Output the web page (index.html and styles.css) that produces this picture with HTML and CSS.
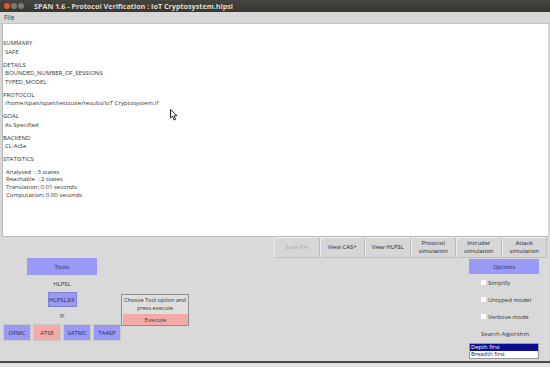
FILE: index.html
```html
<!DOCTYPE html>
<html>
    <head>
        <title>SPAN 1.6 - Protocol Verification</title>
        <meta name="viewport" content="width=device-width, initial-scale=1.0">
        <link rel="stylesheet" href="styles.css">
    </head>
    <body>
        <div class="window">
            <div class="titlebar">
                <span class="win-btn win-close"></span>
                <span class="win-btn"></span>
                <span class="win-btn"></span>
                <span class="title">SPAN 1.6 - Protocol Verification : IoT Cryptosystem.hlpsl</span>
            </div>
            <div class="menubar"><span class="menu-item">File</span></div>

            <div class="output">
                <div class="section">
                    <div class="head">SUMMARY</div>
                    <div class="line">SAFE</div>
                </div>
                <div class="section">
                    <div class="head">DETAILS</div>
                    <div class="line">BOUNDED_NUMBER_OF_SESSIONS</div>
                    <div class="line">TYPED_MODEL</div>
                </div>
                <div class="section">
                    <div class="head">PROTOCOL</div>
                    <div class="line">/home/span/span/testsuite/results/IoT Cryptosystem.if</div>
                </div>
                <div class="section">
                    <div class="head">GOAL</div>
                    <div class="line">As Specified</div>
                </div>
                <div class="section">
                    <div class="head">BACKEND</div>
                    <div class="line">CL-AtSe</div>
                </div>
                <div class="section">
                    <div class="head">STATISTICS</div>
                    <div class="stats">
                        <div class="line">Analysed &nbsp;: 3 states</div>
                        <div class="line">Reachable &nbsp;: 2 states</div>
                        <div class="line">Translation: 0.01 seconds</div>
                        <div class="line">Computation: 0.00 seconds</div>
                    </div>
                </div>
                <svg class="cursor" width="8" height="12" viewBox="0 0 8 12">
                    <path d="M0.5 0.5 L0.5 9 L2.6 7.2 L4.2 11 L5.6 10.4 L4.1 6.7 L7 6.7 Z" fill="#fff" stroke="#111" stroke-width="0.9"/>
                </svg>
            </div>

            <div class="panel">
                <div class="toolbar">
                    <button class="tb-btn disabled">Save file</button>
                    <button class="tb-btn">View CAS+</button>
                    <button class="tb-btn">View HLPSL</button>
                    <button class="tb-btn">Protocol<br>simulation</button>
                    <button class="tb-btn">Intruder<br>simulation</button>
                    <button class="tb-btn">Attack<br>simulation</button>
                </div>
                <div class="lower">
                    <div class="tools">
                        <div class="tree">
                            <div class="blue-btn tools-btn">Tools</div>
                            <div class="label label-hlpsl">HLPSL</div>
                            <div class="blue-btn hlpsl2if">HLPSL2IF</div>
                            <div class="label label-if">IF</div>
                            <div class="backends">
                                <div class="blue-btn backend">OFMC</div>
                                <div class="pink-btn backend">ATSE</div>
                                <div class="blue-btn backend">SATMC</div>
                                <div class="blue-btn backend">TA4SP</div>
                            </div>
                        </div>
                        <div class="exec-box">
                            <div class="exec-text">Choose Tool option and<br>press execute</div>
                            <div class="pink-btn exec-btn">Execute</div>
                        </div>
                    </div>
                    <div class="options">
                        <div class="blue-btn options-btn">Options</div>
                        <label class="opt"><span class="check"></span>Simplify</label>
                        <label class="opt"><span class="check"></span>Untyped model</label>
                        <label class="opt"><span class="check"></span>Verbose mode</label>
                        <div class="opt search">Search Algorithm</div>
                        <div class="algo-list">
                            <div class="algo selected">Depth first</div>
                            <div class="algo">Breadth first</div>
                        </div>
                    </div>
                </div>
            </div>
            <div class="bottom-edge"></div>
        </div>
    </body>
</html>
```
FILE: styles.css
```css
body {
    margin: 0;
    font-family: "Open Sans", "DejaVu Sans", sans-serif;
    background: #d8d8d8;
}
.window {
    width: 550px;
    height: 367px;
    display: flex;
    flex-direction: column;
    overflow: hidden;
}
.titlebar {
    height: 12px;
    flex-shrink: 0;
    background: linear-gradient(#45443f, #37362f);
    display: flex;
    align-items: center;
    padding-left: 4px;
    box-sizing: border-box;
}
.win-btn {
    width: 6px;
    height: 6px;
    border-radius: 50%;
    background: #7b7a74;
    margin-right: 1px;
}
.win-close {
    background: #e4572b;
}
.title {
    margin-left: 9px;
    color: #dfdbd2;
    font-size: 7.2px;
    font-weight: bold;
}
.menubar {
    height: 12px;
    flex-shrink: 0;
    background: #d7d7d5;
    border-bottom: 1px solid #c4c4c2;
    box-sizing: border-box;
    display: flex;
    align-items: center;
    padding-left: 4px;
}
.menu-item {
    font-size: 6.5px;
    color: #333;
}
.output {
    position: relative;
    flex: 1;
    background: #fff;
    margin: 0 2px 0 2px;
    border-left: 1px solid #b8b8b8;
    border-bottom: 1px solid #b8b8b8;
    padding: 15px 0 0 0;
    font-size: 6px;
    color: #333;
}
.section {
    margin-bottom: 4.5px;
}
.head, .line {
    line-height: 8.5px;
    white-space: nowrap;
}
.line {
    padding-left: 2px;
}
.stats {
    margin-top: 5px;
}
.stats .line {
    line-height: 7.8px;
    padding-left: 3px;
}
.cursor {
    position: absolute;
    left: 167px;
    top: 85px;
}
.panel {
    height: 124px;
    flex-shrink: 0;
    background: #d9d9d9;
    margin: 0 2px;
    display: flex;
    flex-direction: column;
}
.toolbar {
    display: flex;
    justify-content: flex-end;
    padding-right: 1px;
}
.tb-btn {
    width: 45.5px;
    height: 21px;
    padding: 0;
    margin: 0;
    background: #d6d6d6;
    border: 1px solid #bdbdbd;
    border-top-color: #ececec;
    border-left-color: #ececec;
    font-family: inherit;
    font-size: 6px;
    line-height: 7.5px;
    color: #262626;
}
.tb-btn.disabled {
    color: #a8a8a8;
}
.lower {
    flex: 1;
    display: flex;
    align-items: flex-start;
    justify-content: space-between;
}
.tools {
    display: flex;
    padding-left: 1px;
}
.tree {
    width: 118px;
    display: flex;
    flex-direction: column;
    align-items: center;
}
.blue-btn, .pink-btn {
    display: flex;
    align-items: center;
    justify-content: center;
    font-size: 6px;
    color: #2a2a50;
    box-sizing: border-box;
}
.blue-btn {
    background: #9a9af6;
}
.pink-btn {
    background: #f4aaa8;
    color: #502a2a;
}
.tools-btn {
    width: 70px;
    height: 17px;
}
.label {
    font-size: 6px;
    color: #333;
    display: flex;
    align-items: center;
}
.label-hlpsl {
    height: 17px;
}
.hlpsl2if {
    width: 29px;
    height: 15px;
    border: 1px solid #8080d0;
}
.label-if {
    height: 17px;
}
.backends {
    display: flex;
    gap: 1.5px;
}
.backend {
    width: 28.5px;
    height: 17px;
    border: 1px solid #c8c8c8;
}
.exec-box {
    align-self: flex-end;
    margin-bottom: 15px;
    width: 68px;
    height: 32px;
    border: 1px solid #8e8e8e;
    box-sizing: border-box;
    background: #dedede;
    display: flex;
    flex-direction: column;
}
.exec-text {
    flex: 1;
    font-size: 5.7px;
    line-height: 8px;
    text-align: center;
    white-space: nowrap;
    letter-spacing: -0.05px;
    color: #333;
    padding-top: 1px;
}
.exec-btn {
    height: 11px;
    margin: 0 0 0 1px;
    width: 65px;
}
.options {
    width: 70px;
    margin-right: 9px;
    display: flex;
    flex-direction: column;
}
.options-btn {
    height: 15px;
    margin-top: 1px;
}
.opt {
    height: 17px;
    display: flex;
    align-items: center;
    font-size: 6px;
    color: #333;
    padding-left: 12px;
}
.search {
    padding-left: 12px;
}
.check {
    width: 5px;
    height: 5px;
    background: #fff;
    margin-right: 2px;
}
.algo-list {
    background: #fff;
    border: 1px solid #9a9a9a;
    box-sizing: border-box;
    height: 16px;
    margin-top: 0.5px;
}
.algo {
    height: 7px;
    line-height: 7px;
    font-size: 5.8px;
    color: #222;
    padding-left: 1px;
}
.algo.selected {
    background: #0c0c8e;
    color: #fff;
}
.bottom-edge {
    height: 6px;
    flex-shrink: 0;
    box-sizing: border-box;
    border-top: 2px solid #4a4a4a;
    background: #e2e2e2;
}
```
